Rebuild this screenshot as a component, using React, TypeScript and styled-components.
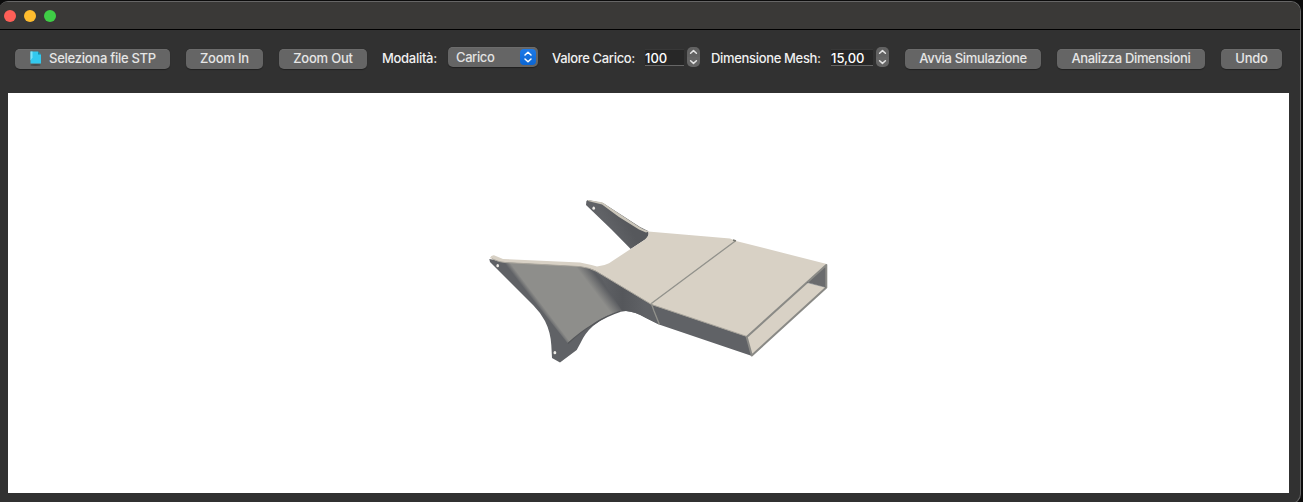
import React from "react";
import styled, { createGlobalStyle } from "styled-components";

const GlobalStyle = createGlobalStyle`
  * { box-sizing: border-box; }
  body { margin: 0; background: #0c0c0c; overflow: hidden; }
`;

const Desktop = styled.div`
  height: 502px;
  padding-top: 1px;
  background: #0c0c0c;
  overflow: hidden;
  font: 500 13px/20px Inter, "Liberation Sans", sans-serif;
`;

const Window = styled.main`
  width: 1302px;
  height: 503px;
  margin-left: -1px;
  display: flex;
  flex-direction: column;
  background: #313131;
  border: 1px solid #666;
  border-left: 0;
  border-radius: 9px 10px 10px 0;
  overflow: hidden;
`;

const TitleBar = styled.header`
  flex: none;
  height: 28px;
  display: flex;
  align-items: center;
  gap: 8px;
  padding-left: 5px;
  background: #3a3937;
  border-bottom: 1px solid #000;
`;

const Light = styled.span<{ $color: string }>`
  width: 12px;
  height: 12px;
  border-radius: 50%;
  background: ${(p) => p.$color};
`;

const Toolbar = styled.div`
  flex: none;
  height: 63px;
  display: flex;
  align-items: flex-start;
  padding: 19px 0 0 16px;
`;

const Button = styled.button<{ $width: number; $after?: number; $track?: number }>`
  flex: none;
  width: ${(p) => p.$width}px;
  height: 20px;
  margin-right: ${(p) => p.$after ?? 16}px;
  padding: 0 0 2px;
  display: flex;
  align-items: center;
  justify-content: center;
  gap: 8px;
  border: 0;
  border-radius: 5px;
  background: #656565;
  box-shadow: 0 0.5px 1px rgba(0, 0, 0, 0.35), inset 0 0.5px 0 #757575;
  color: #e6e6e6;
  font: inherit;
  line-height: 18px;
  letter-spacing: ${(p) => p.$track ?? 0}px;
  white-space: nowrap;
`;

const Label = styled.label<{ $width: number; $track?: number }>`
  flex: none;
  width: ${(p) => p.$width}px;
  color: #f0f0f0;
  line-height: 18px;
  letter-spacing: ${(p) => p.$track ?? 0}px;
  white-space: nowrap;
`;

const Select = styled.div`
  flex: none;
  width: 90px;
  height: 20px;
  margin: -2px 14px 0 0;
  padding: 0 2px 0 8px;
  display: flex;
  align-items: center;
  justify-content: space-between;
  border-radius: 5px;
  background: #656565;
  box-shadow: 0 0.5px 1px rgba(0, 0, 0, 0.35), inset 0 0.5px 0 #757575;
  color: #e2e2e2;
  letter-spacing: -0.4px;
`;

const SelectArrows = styled.span`
  width: 16px;
  height: 16px;
  display: flex;
  border-radius: 4px;
  background: linear-gradient(#1d7ae8, #0b66d4);
`;

const Field = styled.div<{ $width: number; $track?: number }>`
  flex: none;
  width: ${(p) => p.$width}px;
  height: 17px;
  margin-right: 3px;
  border: 1px solid #383838;
  border-width: 1px 0 1px;
  border-bottom-color: #666;
  background: #272727;
  color: #fff;
  line-height: 17px;
  letter-spacing: ${(p) => p.$track ?? 0}px;
`;

const Stepper = styled.span<{ $after: number }>`
  flex: none;
  width: 13px;
  height: 20px;
  margin: -2px ${(p) => p.$after}px 0 0;
  display: flex;
  border-radius: 5px;
  background: linear-gradient(#626262 48%, #555 48%, #555 52%, #656565 52%);
`;

const Viewport = styled.section`
  flex: none;
  width: 1281px;
  height: 400px;
  margin-left: 9px;
  padding: 97px 0 0 472px;
  background: #fff;
`;

const FileIcon = () => (
  <svg width="12" height="16" viewBox="0 0 12 16">
    <ellipse cx="6.5" cy="15" rx="5" ry="0.9" fill="#474b4b" />
    <path d="M1.5 1.5H9L12 4.5V13.5H1.5Z" fill="#33c9ee" />
    <path d="M1.5 1.5H3.5V7.5L1.5 10.5Z" fill="#7fe3f8" />
    <path d="M9 1.5L12 4.5H9Z" fill="#188ba6" />
  </svg>
);

const SelectChevrons = () => (
  <svg width="16" height="16" viewBox="0 0 16 16" fill="none" stroke="#fff" strokeWidth="1.5" strokeLinecap="round" strokeLinejoin="round">
    <path d="M5 6L8 3.2L11 6M5 10L8 12.8L11 10" />
  </svg>
);

const StepChevrons = () => (
  <svg width="13" height="20" viewBox="0 0 13 20" fill="none" stroke="#e4e4e4" strokeWidth="1.5" strokeLinecap="round" strokeLinejoin="round">
    <path d="M3.6 6.2L6.5 3.6L9.4 6.2M3.6 13.8L6.5 16.4L9.4 13.8" />
  </svg>
);

const Bracket = () => (
  <svg width="360" height="180" viewBox="480 190 360 180">
    <defs>
      <linearGradient id="panel" gradientUnits="userSpaceOnUse" x1="505" y1="263.7" x2="557.2" y2="224">
        <stop offset="0" stopColor="#606266" />
        <stop offset="0.07" stopColor="#8e8e8b" />
        <stop offset="0.83" stopColor="#8e8e8b" />
        <stop offset="0.93" stopColor="#717273" />
        <stop offset="1" stopColor="#5b5d61" />
      </linearGradient>
      <linearGradient id="arm" gradientUnits="userSpaceOnUse" x1="608" y1="226" x2="624" y2="217">
        <stop offset="0" stopColor="#606266" />
        <stop offset="1" stopColor="#56585c" />
      </linearGradient>
      <linearGradient id="side" gradientUnits="userSpaceOnUse" x1="600" y1="300" x2="645" y2="300">
        <stop offset="0" stopColor="#606266" />
        <stop offset="0.5" stopColor="#55575b" />
        <stop offset="1" stopColor="#606266" />
      </linearGradient>
    </defs>
    <path d="M586.4 201L588 200L603 203L640 227L648 231Q650 235 646 239L630.7 249L611 229L586 205Z" fill="url(#arm)" />
    <path d="M588 200L602 202.3Q605 204 609 207L639 226.7Q643 229.5 649 231.5L646 232.5L639 229.5L619 217L602 204.5L588 201Z" fill="#cbc6ba" />
    <path d="M489.3 259L503 261.5L580 266L595 269L651 303L748 336L752 356L659 324.5L646 318Q635 311.5 626 311Q618 311 610 315Q600 320 593 326Q585 333 580.5 343L576.7 350L560 362.5L552 358L551.3 345Q550.5 332 545 321Q540 312 533.5 305.5L490 262Z" fill="#606266" />
    <path d="M582 267L598 271L651 304L658 324L646 318Q635 311.5 626 311L616 312Z" fill="url(#side)" />
    <path d="M503 262L580 267Q590 268 600 276L622 310.8Q606 315 594 323L567.5 343Z" fill="url(#panel)" />
    <path d="M568 343.5Q580 332 594 324Q606 316 620 311.4" fill="none" stroke="#55575a" strokeWidth="1.2" />
    <path d="M490 258Q491 255 494 255.2L503 259L580 262.5Q590 264.5 597 266.5Q604 266 609 263.3L631 248.7L645 239.5Q650 235 648 231.5L730 238.5L736 241L826.8 264L748 337L651.5 304.5L596 271Q590 267.5 580 266.5L505 262.3Q498 262 490 258Z" fill="#d8d1c5" />
    <path d="M492 258.8Q499 262.2 505 262.5L580 266.6Q590 267.8 596 271.2L651.5 304.5L747 336.5" fill="none" stroke="#aaa69d" strokeWidth="1" />
    <path d="M826.5 264.5V287.5L808 282.5L806.5 283Z" fill="#6a6b6d" />
    <path d="M746.7 337L807 283L826 287.5L751.8 355.7Z" fill="#d8d1c5" />
    <path d="M746.7 337L826.3 265V287.6L751.8 355.5Z" fill="none" stroke="#8a8a86" strokeWidth="2" strokeLinejoin="round" />
    <path d="M807 282.5L826 287.3" stroke="#66686a" strokeWidth="0.7" />
    <path d="M651.3 303.5L735 241.2M651.3 303.5L654 311L659.5 324.7" fill="none" stroke="#92928c" strokeWidth="1.3" />
    <path d="M733 240L736 241" stroke="#77776f" strokeWidth="1.5" />
    <g fill="#eeece7">
      <ellipse cx="593.7" cy="208.2" rx="1.3" ry="1.6" />
      <ellipse cx="497.7" cy="265.7" rx="1.3" ry="1.6" />
      <ellipse cx="554.9" cy="352.7" rx="1.4" ry="1.6" />
    </g>
  </svg>
);

export default function App() {
  return (
    <Desktop>
      <GlobalStyle />
      <Window>
        <TitleBar>
          <Light $color="#fe5f57" />
          <Light $color="#febc2e" />
          <Light $color="#3fce46" />
        </TitleBar>
        <Toolbar>
          <Button $width={155} $track={-0.27}><FileIcon />Seleziona file STP</Button>
          <Button $width={77} $track={-0.2}>Zoom In</Button>
          <Button $width={88} $after={15} $track={-0.2}>Zoom Out</Button>
          <Label $width={66} $track={-0.3}>Modalità:</Label>
          <Select>Carico<SelectArrows><SelectChevrons /></SelectArrows></Select>
          <Label $width={93} $track={-0.33}>Valore Carico:</Label>
          <Field $width={39} $track={0}>100</Field>
          <Stepper $after={11}><StepChevrons /></Stepper>
          <Label $width={120} $track={-0.33}>Dimensione Mesh:</Label>
          <Field $width={42} $track={0}>15,00</Field>
          <Stepper $after={16}><StepChevrons /></Stepper>
          <Button $width={136} $track={-0.32}>Avvia Simulazione</Button>
          <Button $width={148} $track={-0.32}>Analizza Dimensioni</Button>
          <Button $width={61} $after={0} $track={-0.2}>Undo</Button>
        </Toolbar>
        <Viewport><Bracket /></Viewport>
      </Window>
    </Desktop>
  );
}
